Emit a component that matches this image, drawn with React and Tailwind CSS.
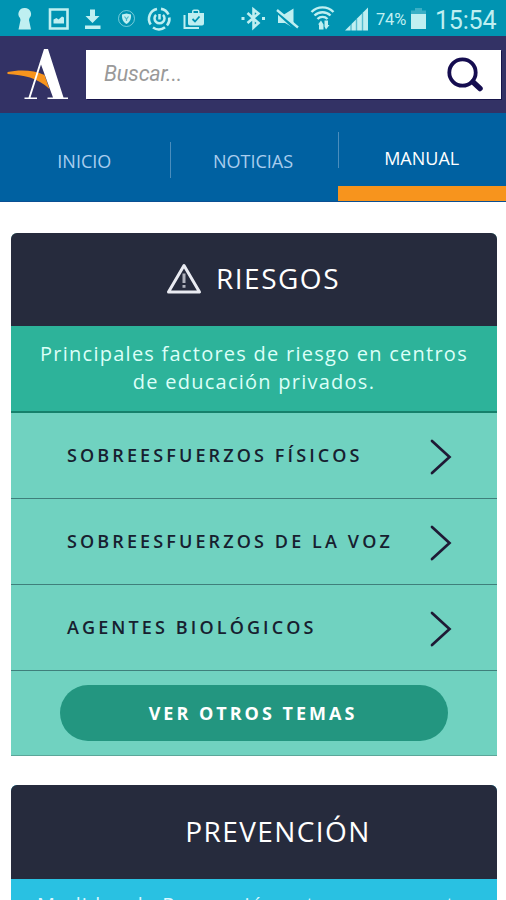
import React, { useState } from 'react';

const TABS = ['INICIO', 'NOTICIAS', 'MANUAL'];
const TOPICS = ['SOBREESFUERZOS FÍSICOS', 'SOBREESFUERZOS DE LA VOZ', 'AGENTES BIOLÓGICOS'];

function NotificationIcons() {
  return (
    <svg width="210" height="36" viewBox="0 0 210 36" className="shrink-0 text-[#bfeff1]" fill="none" stroke="currentColor">
      {/* keyhole */}
      <path d="M25 8a6 6 0 0 1 4.500 10l-.5 2 2 9.500H18.500l2-9.500-.5-2A6 6 0 0 1 25 8z" fill="currentColor" stroke="none" />
      {/* picture */}
      <path d="M50 9.500h17.500v19H50z" strokeWidth="2.600" />
      <path d="M53.500 23.500v-4l3-1.500 2 1.500 3.500-3 2 1v6z" fill="currentColor" stroke="none" />
      {/* download */}
      <path d="M90 9.500h5V16h4.500l-7 7-7-7H90zM85 25.500h15.500V29H85z" fill="currentColor" stroke="none" />
      {/* shield */}
      <circle cx="126.500" cy="18.500" r="8" strokeWidth="1" opacity="0.6" />
      <path d="M122 14.500l4.500-1 4.500 1c.3 4.500-1 7.500-4.500 9.500-3.500-2-4.800-5-4.500-9.500z" fill="currentColor" stroke="none" />
      <path d="M124.500 16.500l2 2.500 2-2.500M126.500 19v2" stroke="#4db9c9" strokeWidth="1.200" />
      {/* sync ring */}
      <path d="M161 8.900a10 10 0 0 1 7.500 5.600M169.300 17.500a10 10 0 0 1-2.300 8M165 27.300a10 10 0 0 1-12 0.200M150.700 24.500a10 10 0 0 1 6.300-15.400" strokeWidth="2.600" />
      <path d="M156 14.800a5 5 0 1 0 7 0M159.500 14v5.500" strokeWidth="2.500" />
      {/* store bag */}
      <path d="M184.500 15v13H199" strokeWidth="2" />
      <path d="M188 13h4v-1.500a2 2 0 0 1 2-2h3.500a2 2 0 0 1 2 2V13h4.500v10.500a2 2 0 0 1-2 2H190a2 2 0 0 1-2-2zM193.500 13h4.500v-2h-4.500z" fill="currentColor" fillRule="evenodd" stroke="none" />
      <path d="M192.500 19l2.500 2.500 4.500-5" stroke="#0094b2" strokeWidth="1.800" />
    </svg>
  );
}

function SignalIcons() {
  return (
    <svg width="132" height="36" viewBox="240 0 132 36" className="shrink-0 text-[#bfeff1]" fill="none" stroke="currentColor">
      {/* bluetooth */}
      <path d="M247.500 13l11 10-5 4.500V9.500l5 4-11 9.500" strokeWidth="2.600" />
      <path d="M241.500 17h3v3h-3zM262 17h3v3h-3z" fill="currentColor" stroke="none" />
      {/* muted speaker */}
      <path d="M278 14.500h6l9.500-6v19.500l-8.500-5h-7z" fill="currentColor" stroke="none" />
      <path d="M277 11.500L296 29" stroke="#0094b2" strokeWidth="3.500" />
      <path d="M277 10l21 17.500" strokeWidth="2.400" />
      {/* wifi */}
      <path d="M311.500 12a15.500 15.500 0 0 1 22 0M314.500 15.500a11.500 11.500 0 0 1 16 0M317.500 19a7 7 0 0 1 10 0" strokeWidth="2.400" />
      <path d="M319 29.500v-5h-1l3-4 2.500 4V29.500zM324.500 20.500h3.500v4.500h1.500l-3.500 4.500-1.500-3z" fill="currentColor" stroke="none" />
      {/* cell signal */}
      <path d="M345 30.500L368 7.500v23z" fill="currentColor" stroke="none" />
      <path d="M351 24v7M356.500 19v12M362.500 13v18" stroke="#0094b2" strokeWidth="1.400" opacity="0.55" />
    </svg>
  );
}

function StatusBar() {
  return (
    <div className="flex h-9 items-center bg-[#0094b2] font-[Roboto,sans-serif] text-[#bfeff1]">
      <NotificationIcons />
      <div className="ml-[30px] flex items-center">
        <SignalIcons />
        <span className="ml-1 mt-1 w-[33px] whitespace-nowrap text-[16.500px] leading-none tracking-[-0.200px]">74%</span>
        <svg width="18" height="36" viewBox="0 0 18 36" fill="currentColor">
          <path d="M2 14h15v15H2z" />
          <path d="M2 10.500h4V8h7v2.500h4V14H2z" opacity="0.300" />
        </svg>
        <span className="ml-2 mt-1 whitespace-nowrap text-[25px] leading-none tracking-[-0.200px]">15:54</span>
      </div>
    </div>
  );
}

function Logo() {
  return (
    <svg width="86" height="77" viewBox="0 36 86 77" className="shrink-0">
      <path d="M7.500 72c11-2.500 26-2.500 37 3l5 14C37 77.500 24 75 7.500 74z" fill="#f7941d" />
      <path d="M44 49h4l15.500 48.500H68v1.500H47.500v-1.500H53L41 64.500 30.500 97.500H37V99H24.500v-1.500h4z" fill="#fff" />
    </svg>
  );
}

function SearchBar() {
  const [query, setQuery] = useState('');

  return (
    <header className="flex h-[77px] bg-[#333265]">
      <Logo />
      <div className="mt-[14px] flex h-[49px] w-[415px] items-center bg-white shadow-[1px_1px_0_#17154a]">
        <input
          type="text"
          value={query}
          onChange={(e) => setQuery(e.target.value)}
          placeholder="Buscar..."
          className="min-w-0 flex-1 pl-[18px] font-[Roboto,sans-serif] text-[21.500px] italic tracking-[-0.200px] text-[#333265] outline-none placeholder:text-[#9a9a9a]"
        />
        <svg width="36" height="36" viewBox="0 0 36 36" className="mr-[18px]" fill="none" stroke="#150d50">
          <circle cx="15.500" cy="15.500" r="13.200" strokeWidth="3.800" />
          <path d="M26 25l7 6.500" strokeWidth="5.500" strokeLinecap="round" />
        </svg>
      </div>
    </header>
  );
}

function Tabs({ active, onSelect }) {
  return (
    <nav className="grid h-[89px] grid-cols-3 border-b border-[#0a4f93] bg-[#0061a1]">
      {TABS.map((tab, i) => {
        const selected = tab === active;
        return (
          <button
            key={tab}
            onClick={() => onSelect(tab)}
            className={`flex flex-col justify-between ${selected ? 'text-white' : 'text-[#a9cdee]'}`}
          >
            <span
              className={`flex h-9 w-full items-center justify-center text-[18px] leading-none ${
                selected ? 'mt-[19px] pt-4' : 'mt-[29px] pt-0.5'
              } ${i > 0 ? 'relative' : ''}`}
            >
              {i > 0 && <span className="absolute left-px top-0 h-9 w-px bg-[#4a8dbd]" />}
              {tab}
            </span>
            {selected && <span className="ml-px h-[15px] self-stretch bg-[#f7941d]" />}
          </button>
        );
      })}
    </nav>
  );
}

function WarningIcon() {
  return (
    <svg width="36" height="32" viewBox="0 0 36 32" fill="none" stroke="#e9ebf2">
      <path d="M18 3.500L33.500 30h-31z" strokeWidth="3" strokeLinejoin="round" />
      <path d="M18 11.500V21M18 23v2.800" strokeWidth="3" opacity="0.700" />
    </svg>
  );
}

function TopicRow({ label }) {
  return (
    <li className="flex h-[86px] items-center justify-between border-b border-[#3f7f7b] pl-14 pr-[45px]">
      <span className="pb-0.5 text-[18px] font-semibold leading-none tracking-[3.120px] text-[#17202f]">{label}</span>
      <svg width="22" height="36" viewBox="0 0 22 36" className="mt-0.5" fill="none" stroke="#1f1a35">
        <path d="M2 2l17.500 16L2 34" strokeWidth="2.700" strokeLinecap="round" />
      </svg>
    </li>
  );
}

export default function App() {
  const [active, setActive] = useState('MANUAL');

  return (
    <div className="h-[900px] w-[506px] overflow-hidden bg-white font-['Open_Sans',sans-serif]">
      <StatusBar />
      <SearchBar />
      <Tabs active={active} onSelect={setActive} />

      <main className="flex flex-col gap-[29px] pl-[11px] pr-[9px] pt-[31px]">
        {/* Riesgos */}
        <section className="overflow-hidden rounded-t-md bg-[#70d2c0]">
          <h2 className="flex h-[93px] items-center justify-center gap-3.5 bg-[#262b3d] pb-[3px] pr-0.5 text-[28px] tracking-[1.500px] text-white">
            <WarningIcon />
            RIESGOS
          </h2>
          <p className="h-[87px] border-b-2 border-[#16806b] bg-[#2db39a] px-5 pt-3.5 text-center text-[20px] leading-7 tracking-[1.250px] text-[#dcfff8]">
            Principales factores de riesgo en centros de educación privados.
          </p>
          <ul>
            {TOPICS.map((topic) => (
              <TopicRow key={topic} label={topic} />
            ))}
          </ul>
          <div className="h-[85px] border-b border-[#5ba699] pt-3.5">
            <button className="ml-[49px] h-14 w-[388px] rounded-full bg-[#239680] pb-px pr-0.5 text-[18px] font-bold leading-none tracking-[3px] text-white">
              VER OTROS TEMAS
            </button>
          </div>
        </section>

        {/* Prevención */}
        <section className="overflow-hidden rounded-t-md bg-[#29c1e2]">
          <h2 className="flex h-[94px] items-center justify-center bg-[#262b3d] pb-0.5 pl-12 text-[28px] tracking-[1.400px] text-white">
            PREVENCIÓN
          </h2>
          <p className="whitespace-nowrap pl-[26px] pt-3 text-[20px] leading-7 tracking-[1.100px] text-[#dcf8ff]">
            Medidas de Prevención este caso urgente
          </p>
        </section>
      </main>
    </div>
  );
}
